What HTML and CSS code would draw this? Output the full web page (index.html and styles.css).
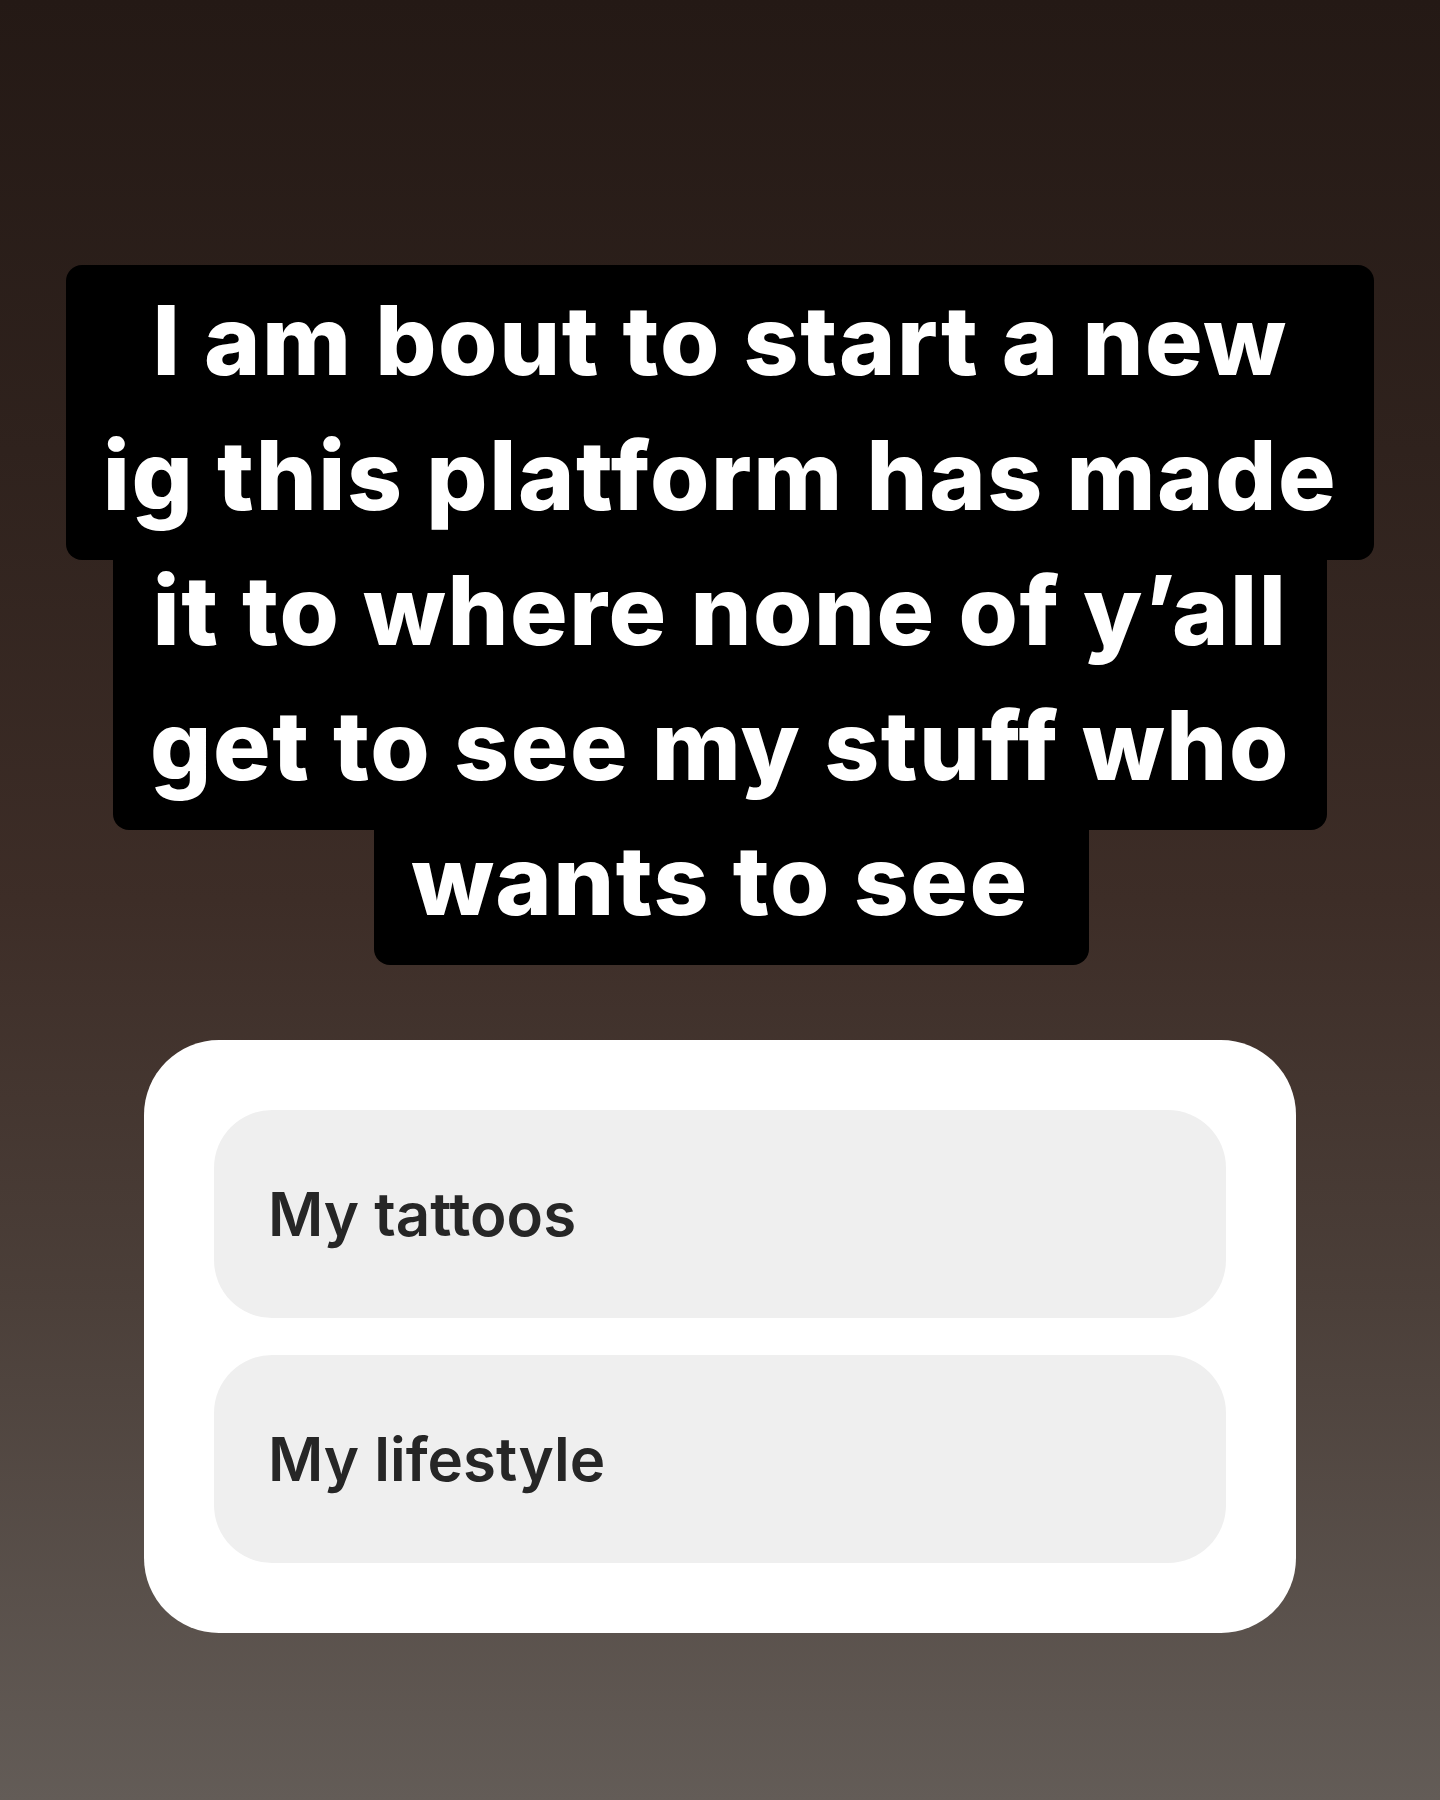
FILE: index.html
```html
<!DOCTYPE html>
<html lang="en">
<head>
    <meta charset="UTF-8">
    <meta name="viewport" content="width=device-width, initial-scale=1.0">
    <title>Story Poll</title>
    <link rel="stylesheet" href="styles.css">
</head>
<body>
    <div class="story">
        <div class="caption">
            <div class="caption-block">I am bout to start a new<br>ig this platform has made</div>
            <div class="caption-block">it to where none of y’all<br>get to see my stuff who</div>
            <div class="caption-block caption-last">wants to see</div>
        </div>

        <div class="poll">
            <div class="poll-option">My tattoos</div>
            <div class="poll-option">My lifestyle</div>
        </div>
    </div>
</body>
</html>
```

FILE: styles.css
```css
body {
    margin: 0;
    height: 1800px;
    font-family: 'Inter', 'Roboto', sans-serif;
    background: linear-gradient(180deg, #241915 0%, #2f221d 25%, #3d2d27 50%, #4b3f39 72%, #635c57 100%);
    overflow: hidden;
}
.story {
    display: flex;
    flex-direction: column;
    align-items: center;
    padding-top: 265px;
}
.caption {
    display: flex;
    flex-direction: column;
    align-items: center;
}
.caption-block {
    background-color: #000000;
    color: #ffffff;
    font-weight: 800;
    font-size: 96px;
    line-height: 135px;
    letter-spacing: 1.6px;
    text-align: center;
    padding: 8px 37px 17px;
    border-radius: 16px;
    white-space: nowrap;
}
.caption-block + .caption-block {
    margin-top: -25px;
}
/* last line keeps a little trailing room like the original sticker */
.caption-last {
    padding-right: 60px;
    margin-left: 23px;
}
.poll {
    margin-top: 75px;
    width: 1152px;
    box-sizing: border-box;
    padding: 70px;
    background-color: #ffffff;
    border-radius: 75px;
    display: flex;
    flex-direction: column;
    gap: 37px;
}
.poll-option {
    height: 208px;
    display: flex;
    align-items: center;
    padding-left: 54px;
    background-color: #efefef;
    border-radius: 58px;
    font-size: 60px;
    font-weight: 600;
    letter-spacing: 0;
    color: #262626;
}
```
